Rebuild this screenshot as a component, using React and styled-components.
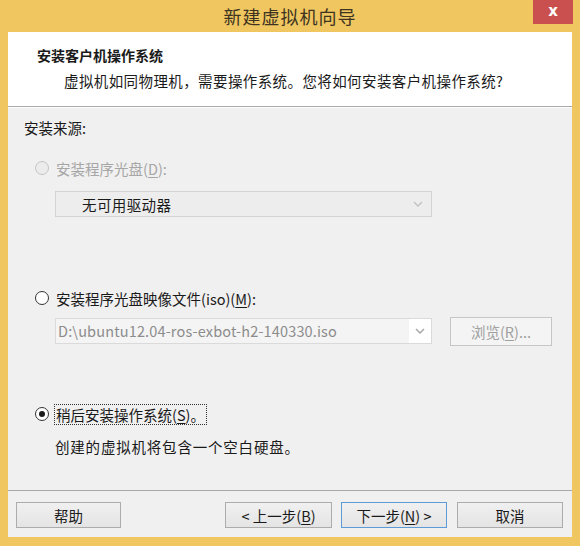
import styled, { createGlobalStyle } from 'styled-components';

const GlobalStyle = createGlobalStyle`
  html, body {
    margin: 0;
    padding: 0;
    background: #efc660;
  }
  body {
    font-family: "Noto Sans CJK SC", "Noto Sans", sans-serif;
    color: #1a1a1a;
  }
`;

const Frame = styled.div`
  width: 580px;
  height: 546px;
  background: #efc660;
  display: flex;
  flex-direction: column;
  box-sizing: border-box;
`;

const TitleBar = styled.div`
  height: 32px;
  display: grid;
  grid-template-columns: 47px 1fr 47px;
  align-items: start;
`;

const Title = styled.div`
  grid-column: 2;
  text-align: center;
  font-size: 18px;
  line-height: 32px;
  letter-spacing: 1px;
  color: #3d3320;
`;

const CloseButton = styled.div`
  grid-column: 3;
  width: 40px;
  height: 24px;
  background: #c9504e;
  color: #fff;
  font-family: "DejaVu Sans", sans-serif;
  font-weight: bold;
  font-size: 15px;
  line-height: 23px;
  text-align: center;
`;

const Panel = styled.div`
  margin: 0 8px 9px 8px;
  flex: 1;
  background: #f0f0f0;
  display: flex;
  flex-direction: column;
`;

const Header = styled.div`
  height: 75px;
  background: #fff;
  border-bottom: 1px solid #a9a9a9;
  box-sizing: border-box;
  padding: 13px 0 0 29px;
`;

const HeaderTitle = styled.div`
  font-size: 14px;
  font-weight: bold;
  line-height: 20px;
`;

const HeaderSub = styled.div`
  font-size: 14.5px;
  line-height: 20px;
  letter-spacing: 0.4px;
  margin: 6px 0 0 27px;
`;

const Body = styled.div`
  flex: 1;
  padding: 10px 0 0 16px;
  border-top: 1px solid #fff;
`;

const Text = styled.div`
  font-size: 14.5px;
  line-height: 20px;
  letter-spacing: ${(p) => p.ls || 0}px;
  margin-top: ${(p) => p.mt || 0}px;
  margin-left: ${(p) => p.ml || 0}px;
  color: ${(p) => (p.disabled ? '#a6a6a6' : '#1a1a1a')};
`;

const RadioRow = styled.div`
  display: flex;
  align-items: center;
  height: 20px;
  margin-top: ${(p) => p.mt}px;
  margin-left: 11px;
  gap: 5px;
  font-size: 14.5px;
  color: ${(p) => (p.disabled ? '#a6a6a6' : '#1a1a1a')};
`;

const Radio = styled.span`
  width: 14px;
  height: 14px;
  border-radius: 50%;
  box-sizing: border-box;
  border: 1px solid ${(p) => (p.disabled ? '#c4c4c4' : '#333')};
  background: ${(p) => (p.disabled ? '#ececec' : '#fff')};
  display: flex;
  align-items: center;
  justify-content: center;
  flex: none;
  &::after {
    content: '';
    display: ${(p) => (p.checked ? 'block' : 'none')};
    width: 6px;
    height: 6px;
    border-radius: 50%;
    background: #1a1a1a;
  }
`;

const Label = styled.span`
  line-height: 19px;
  padding: 0 1px;
  border: 1px dotted ${(p) => (p.focused ? '#333' : 'transparent')};
`;

const Key = styled.span`
  text-decoration: underline;
  text-underline-offset: 2px;
`;

const Select = styled.div`
  width: 377px;
  height: 26px;
  box-sizing: border-box;
  margin: 13px 0 0 31px;
  border: 1px solid #d4d4d4;
  background: #ededed;
  display: flex;
  align-items: center;
  padding: 0 8px 0 26px;
  font-size: 14.5px;
  color: #1a1a1a;
`;

const SelectText = styled.span`
  flex: 1;
  letter-spacing: 0.4px;
`;

const ComboRow = styled.div`
  display: flex;
  align-items: center;
  height: 30px;
  margin: 8px 0 0 31px;
  gap: 18px;
`;

const Combo = styled.div`
  width: 377px;
  height: 26px;
  box-sizing: border-box;
  border: 1px solid #dadada;
  background: #f4f4f4;
  display: flex;
  align-items: stretch;
  font-size: 14.5px;
  color: #8c8c8c;
`;

const ComboText = styled.span`
  flex: 1;
  padding-left: 2px;
  line-height: 24px;
  letter-spacing: 0.15px;
`;

const ComboArrow = styled.span`
  width: 22px;
  background: #fff;
  display: flex;
  align-items: center;
  justify-content: center;
`;

const Footer = styled.div`
  height: 47px;
  border-top: 1px solid #a9a9a9;
  box-sizing: border-box;
  display: flex;
  align-items: flex-start;
  padding: 11px 10px 0 8px;
`;

const Button = styled.div`
  width: ${(p) => p.w || 106}px;
  height: ${(p) => p.h || 26}px;
  box-sizing: border-box;
  margin-left: ${(p) => p.ml || 0}px;
  border: 1px solid ${(p) => (p.primary ? '#5c9bd8' : p.disabled ? '#c6c6c6' : '#acacac')};
  background: ${(p) =>
    p.disabled ? '#f4f4f4' : 'linear-gradient(#f0f0f0, #e4e4e4)'};
  color: ${(p) => (p.disabled ? '#a0a0a0' : '#1a1a1a')};
  font-size: 14.5px;
  display: flex;
  align-items: center;
  justify-content: center;
  flex: none;
`;

const Chevron = ({ color = '#a8a8a8' }) => (
  <svg width="10" height="6" viewBox="0 0 10 6">
    <path d="M1 1 L5 5 L9 1" fill="none" stroke={color} strokeWidth="1.5" />
  </svg>
);

export default function App() {
  return (
    <>
      <GlobalStyle />
      <Frame>
        <TitleBar>
          <Title>新建虚拟机向导</Title>
          <CloseButton>x</CloseButton>
        </TitleBar>
        <Panel>
          <Header>
            <HeaderTitle>安装客户机操作系统</HeaderTitle>
            <HeaderSub>虚拟机如同物理机，需要操作系统。您将如何安装客户机操作系统?</HeaderSub>
          </Header>
          <Body>
            <Text>安装来源:</Text>
            <RadioRow mt={20} disabled>
              <Radio disabled />
              <Label>
                安装程序光盘(<Key>D</Key>):
              </Label>
            </RadioRow>
            <Select>
              <SelectText>无可用驱动器</SelectText>
              <Chevron color="#c4c4c4" />
            </Select>
            <RadioRow mt={71}>
              <Radio />
              <Label>
                安装程序光盘映像文件(iso)(<Key>M</Key>):
              </Label>
            </RadioRow>
            <ComboRow>
              <Combo>
                <ComboText>D:\ubuntu12.04-ros-exbot-h2-140330.iso</ComboText>
                <ComboArrow>
                  <Chevron />
                </ComboArrow>
              </Combo>
              <Button w={102} h={29} disabled>
                浏览(<Key>R</Key>)...
              </Button>
            </ComboRow>
            <RadioRow mt={58}>
              <Radio checked />
              <Label focused>
                稍后安装操作系统(<Key>S</Key>)。
              </Label>
            </RadioRow>
            <Text mt={13} ml={31} ls={0.8}>
              创建的虚拟机将包含一个空白硬盘。
            </Text>
          </Body>
          <Footer>
            <Button w={105}>帮助</Button>
            <Button w={107} ml={104}>
              &lt; 上一步(<Key>B</Key>)
            </Button>
            <Button w={106} ml={9} primary>
              下一步(<Key>N</Key>) &gt;
            </Button>
            <Button w={106} ml={10}>
              取消
            </Button>
          </Footer>
        </Panel>
      </Frame>
    </>
  );
}
